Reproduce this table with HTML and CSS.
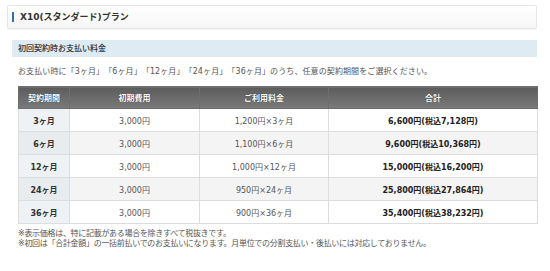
FILE: index.html
```html
<!DOCTYPE html>
<html lang="ja">
<head>
<meta charset="utf-8">
<link rel="stylesheet" href="styles.css">
</head>
<body>
<div class="page">
  <div class="plan-title"><span class="bar"></span><span class="plan-name">X10(スタンダード)プラン</span></div>
  <div class="section">
    <h3 class="section-head">初回契約時お支払い料金</h3>
    <div class="section-body">
      <p class="lead">お支払い時に「3ヶ月」「6ヶ月」「12ヶ月」「24ヶ月」「36ヶ月」のうち、任意の契約期間をご選択ください。</p>
      <table class="price">
        <colgroup>
          <col class="c1"><col class="c2"><col class="c3"><col class="c4">
        </colgroup>
        <thead>
          <tr><th>契約期間</th><th>初期費用</th><th>ご利用料金</th><th>合計</th></tr>
        </thead>
        <tbody>
          <tr><th>3ヶ月</th><td>3,000円</td><td>1,200円×3ヶ月</td><td class="total">6,600円(税込7,128円)</td></tr>
          <tr class="alt"><th>6ヶ月</th><td>3,000円</td><td>1,100円×6ヶ月</td><td class="total">9,600円(税込10,368円)</td></tr>
          <tr><th>12ヶ月</th><td>3,000円</td><td>1,000円×12ヶ月</td><td class="total">15,000円(税込16,200円)</td></tr>
          <tr class="alt"><th>24ヶ月</th><td>3,000円</td><td>950円×24ヶ月</td><td class="total">25,800円(税込27,864円)</td></tr>
          <tr><th>36ヶ月</th><td>3,000円</td><td>900円×36ヶ月</td><td class="total">35,400円(税込38,232円)</td></tr>
        </tbody>
      </table>
      <p class="note">※表示価格は、特に記載がある場合を除きすべて税抜きです。</p>
      <p class="note">※初回は「合計金額」の一括前払いでのお支払いになります。月単位での分割支払い・後払いには対応しておりません。</p>
    </div>
  </div>
</div>
</body>
</html>
```

FILE: styles.css
```css
html, body {
  margin: 0;
  padding: 0;
  background: #ffffff;
}
body {
  font-family: "DejaVu Sans", "Noto Sans CJK JP", sans-serif;
  font-size: 8px;
  color: #555555;
  text-spacing-trim: space-all;
}
.page {
  width: 550px;
  padding-top: 5px;
}
.plan-title {
  margin: 0 13px 0 7px;
  height: 22px;
  border: 1px solid #e6e6e6;
  border-radius: 2px;
  background: linear-gradient(#ffffff, #f6f6f6);
  box-shadow: 0 1px 1px rgba(0,0,0,0.04);
  display: flex;
  align-items: center;
  padding-left: 4px;
  gap: 6px;
}
.bar {
  width: 2px;
  height: 10px;
  background: #2f6fb4;
}
.plan-name {
  font-size: 9px;
  font-weight: bold;
  color: #333333;
  line-height: 1;
}
.section {
  margin: 11px 13px 0 12px;
}
.section-head {
  margin: 0;
  height: 17px;
  background: #deebf3;
  font-size: 8px;
  font-weight: normal;
  color: #333333;
  line-height: 17px;
  padding-left: 6px;
  text-shadow: 0 0 0.4px rgba(0,0,0,0.5);
}
.section-body {
  padding-left: 6px;
}
.lead {
  margin: 9px 0 8px 0;
  line-height: 12px;
  color: #555555;
  letter-spacing: 0.1px;
}
.price {
  width: 519px;
  border-collapse: collapse;
  table-layout: fixed;
}
.c1 { width: 51px; }
.c2 { width: 130px; }
.c3 { width: 129px; }
.c4 { width: 209px; }
.price thead th {
  height: 21px;
  padding: 0;
  background: linear-gradient(#5c5c5c, #7a7a7a);
  color: #ffffff;
  font-weight: bold;
  font-size: 8px;
  text-shadow: 0 0 1px rgba(0,0,0,0.7);
  border: 1px solid #6e6e6e;
  border-left-color: #8a8a8a;
}
.price thead th:first-child {
  border-left-color: #6e6e6e;
}
.price tbody th,
.price tbody td {
  height: 22px;
  padding: 0;
  text-align: center;
  border: 1px solid #dddddd;
  font-size: 8px;
}
.price tbody th {
  background: #eef2f5;
  color: #333333;
  font-weight: bold;
}
.price tbody td {
  background: #ffffff;
  color: #555555;
}
.price tbody tr.alt td {
  background: #f4f4f4;
}
.price tbody tr.alt th {
  background: #e8ecef;
}
.price td.total {
  font-weight: bold;
  color: #222222;
}
.note {
  margin: 0;
  line-height: 9.5px;
  color: #555555;
  letter-spacing: -0.3px;
}
.price + .note {
  margin-top: 5px;
}
```
